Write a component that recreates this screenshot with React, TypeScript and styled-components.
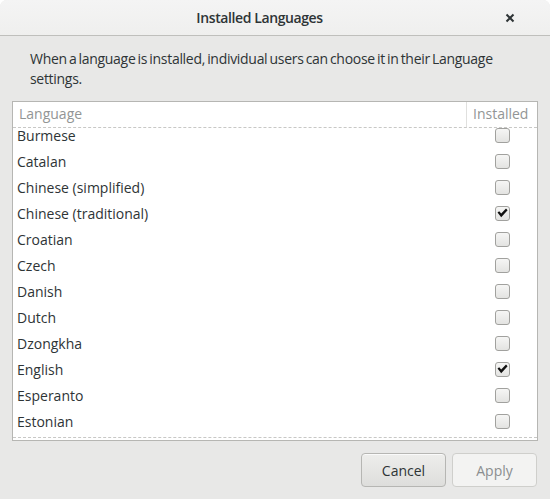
import React from "react";
import styled, { createGlobalStyle } from "styled-components";

const Global = createGlobalStyle`
  html, body { margin: 0; padding: 0; background: #ffffff; }
  body { font-family: "Open Sans", "Noto Sans", sans-serif; color: #2e3436; }
  * { box-sizing: border-box; }
`;

const Window = styled.div`
  width: 550px;
  height: 499px;
  display: flex;
  flex-direction: column;
  background: #e8e8e7;
  border-radius: 7px 7px 0 0;
  overflow: hidden;
`;

const HeaderBar = styled.div`
  height: 36px;
  flex: none;
  display: flex;
  align-items: center;
  background: linear-gradient(#f4f4f4, #efefee);
  border-bottom: 1px solid #bfbfbc;
  padding: 0 33px 0 0;
`;

const Title = styled.div`
  flex: 1;
  text-align: center;
  font-size: 14px;
  font-weight: 600;
  letter-spacing: -0.4px;
  color: #2e3436;
  padding-left: 16px;
`;

const CloseButton = styled.div`
  width: 14px;
  height: 14px;
  display: flex;
  align-items: center;
  justify-content: center;
`;

const Body = styled.div`
  flex: 1;
  display: flex;
  flex-direction: column;
  padding: 13px 12px 12px 12px;
`;

const Description = styled.p`
  margin: 0 0 12px 0;
  padding: 0 10px 0 18px;
  font-size: 14px;
  line-height: 20px;
  letter-spacing: -0.3px;
  word-spacing: -1.2px;
  color: #2e3436;
`;

const Frame = styled.div`
  height: 340px;
  display: flex;
  flex-direction: column;
  background: #ffffff;
  border: 1px solid #b6b6b3;
`;

const HeadRow = styled.div`
  height: 26px;
  flex: none;
  display: flex;
  border-bottom: 1px dashed #c8c8c6;
`;

const HeadCell = styled.div<{ $wide?: boolean }>`
  display: flex;
  align-items: center;
  font-size: 14px;
  color: #929595;
  padding: 0 6px 3px 6px;
  ${(p) => (p.$wide ? "flex: 1; border-right: 1px solid #e0e0de;" : "width: 70px;")}
`;

const Viewport = styled.div`
  flex: 1;
  min-height: 0;
  overflow: hidden;
  border-bottom: 1px dashed #c8c8c6;
  margin-bottom: 2px;
`;

const List = styled.div`
  margin-top: -6px;
`;

const Row = styled.div`
  height: 26px;
  display: flex;
  align-items: center;
  padding: 0 27px 0 4px;
`;

const Name = styled.span`
  flex: 1;
  font-size: 14px;
  color: #2e3436;
`;

const Check = styled.span`
  width: 15px;
  height: 15px;
  display: flex;
  align-items: center;
  justify-content: center;
  border: 1px solid #a1a19e;
  border-radius: 3px;
  background: linear-gradient(#f6f6f5, #e3e3e1);
`;

const Footer = styled.div`
  display: flex;
  justify-content: flex-end;
  gap: 6px;
  margin-top: auto;
  padding-right: 1px;
`;

const Button = styled.button<{ $disabled?: boolean }>`
  width: 85px;
  height: 34px;
  font-family: inherit;
  font-size: 14px;
  border-radius: 4px;
  border: 1px solid ${(p) => (p.$disabled ? "#cfcfcc" : "#b6b6b3")};
  color: ${(p) => (p.$disabled ? "#8b8e8f" : "#2e3436")};
  background: ${(p) =>
    p.$disabled ? "#f3f3f2" : "linear-gradient(#eeeeec, #dededc)"};
  box-shadow: ${(p) => (p.$disabled ? "none" : "inset 0 1px #fafafa")};
`;

const languages: [string, boolean][] = [
  ["Burmese", false],
  ["Catalan", false],
  ["Chinese (simplified)", false],
  ["Chinese (traditional)", true],
  ["Croatian", false],
  ["Czech", false],
  ["Danish", false],
  ["Dutch", false],
  ["Dzongkha", false],
  ["English", true],
  ["Esperanto", false],
  ["Estonian", false],
];

const CheckMark = () => (
  <svg width="11" height="10" viewBox="0 0 11 10">
    <path d="M0.5 4.6 L2.2 3.2 L4.2 5.4 L9 0.6 L10.6 2.2 L4.2 9.2 Z" fill="#111" />
  </svg>
);

export default function App() {
  return (
    <>
      <Global />
      <Window>
        <HeaderBar>
          <Title>Installed Languages</Title>
          <CloseButton>
            <svg width="10" height="10" viewBox="0 0 10 10">
              <path d="M1.5 1.5 L8.5 8.5 M8.5 1.5 L1.5 8.5" stroke="#2e3436" strokeWidth="2" />
            </svg>
          </CloseButton>
        </HeaderBar>
        <Body>
          <Description>
            When a language is installed, individual users can choose it in their Language settings.
          </Description>
          <Frame>
            <HeadRow>
              <HeadCell $wide>Language</HeadCell>
              <HeadCell>Installed</HeadCell>
            </HeadRow>
            <Viewport>
              <List>
                {languages.map(([name, on]) => (
                  <Row key={name}>
                    <Name>{name}</Name>
                    <Check>{on && <CheckMark />}</Check>
                  </Row>
                ))}
              </List>
            </Viewport>
          </Frame>
          <Footer>
            <Button>Cancel</Button>
            <Button $disabled>Apply</Button>
          </Footer>
        </Body>
      </Window>
    </>
  );
}
